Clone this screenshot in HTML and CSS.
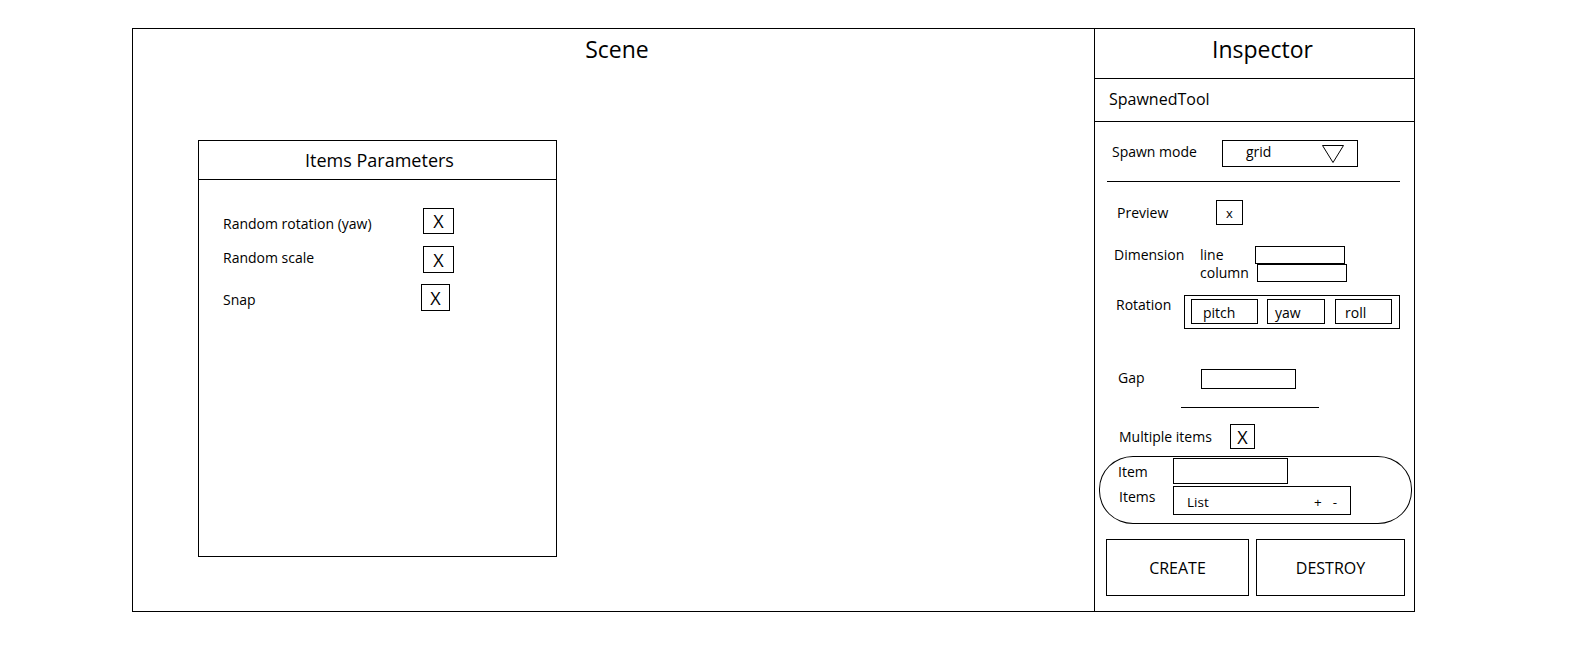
FILE: index.html
```html
<!DOCTYPE html>
<html lang="en">
<head>
<meta charset="utf-8">
<title>Spawn tool mockup</title>
<link rel="stylesheet" href="styles.css">
</head>
<body>
<div class="frame">
  <section class="scene">
    <h1 class="scene-title">Scene</h1>
    <div class="params">
      <div class="params-head">Items Parameters</div>
      <div class="params-body">
        <div class="prow prow-1"><span class="plabel">Random rotation (yaw)</span><span class="pchk">X</span></div>
        <div class="prow prow-2"><span class="plabel">Random scale</span><span class="pchk">X</span></div>
        <div class="prow prow-3"><span class="plabel">Snap</span><span class="pchk">X</span></div>
      </div>
    </div>
  </section>
  <aside class="inspector">
    <div class="insp-head">Inspector</div>
    <div class="insp-sub">SpawnedTool</div>
    <div class="insp-body">
      <div class="spawn-row">
        <span class="spawn-label">Spawn mode</span>
        <div class="dropdown">
          <span class="dropdown-value">grid</span>
          <svg class="tri" width="22" height="18" viewBox="0 0 22 18"><polygon points="0.5,0.5 21.5,0.5 11,17.5" fill="none" stroke="#000" stroke-width="1"/></svg>
        </div>
      </div>
      <div class="hr hr-wide"></div>
      <div class="preview-row">
        <span class="preview-label">Preview</span>
        <span class="small-chk">x</span>
      </div>
      <div class="dim-grid">
        <span class="dim-label">Dimension</span>
        <span class="dim-sub">line</span>
        <span class="field dim-field"></span>
        <span></span>
        <span class="dim-sub">column</span>
        <span class="field dim-field dim-field-2"></span>
      </div>
      <div class="rot-row">
        <span class="rot-label">Rotation</span>
        <div class="rot-box">
          <span class="rot-item rot-pitch">pitch</span>
          <span class="rot-item rot-yaw">yaw</span>
          <span class="rot-item rot-roll">roll</span>
        </div>
      </div>
      <div class="gap-row">
        <span class="gap-label">Gap</span>
        <span class="field gap-field"></span>
      </div>
      <div class="hr hr-short"></div>
      <div class="multi-row">
        <span class="multi-label">Multiple items</span>
        <span class="big-chk">X</span>
      </div>
      <div class="group">
        <div class="group-row group-row-1">
          <span class="group-label">Item</span>
          <span class="field item-field"></span>
        </div>
        <div class="group-row group-row-2">
          <span class="group-label group-label-2">Items</span>
          <div class="list-field"><span>List</span><span class="list-ops"><span>+</span><span>-</span></span></div>
        </div>
      </div>
      <div class="buttons">
        <div class="btn btn-create">CREATE</div>
        <div class="btn btn-destroy">DESTROY</div>
      </div>
    </div>
  </aside>
</div>
</body>
</html>
```
FILE: styles.css
```css
* { box-sizing: border-box; }

body {
  margin: 0;
  background: #fff;
  color: #000;
  font-family: "Open Sans", "Noto Sans", sans-serif;
  font-size: 14px;
}

.frame {
  margin: 28px 0 0 132px;
  width: 1283px;
  height: 584px;
  border: 1px solid #000;
  display: flex;
}

/* ---------- Scene ---------- */
.scene {
  flex: 1;
}

.scene-title {
  margin: 0;
  height: 39px;
  padding-top: 1px;
  line-height: 38px;
  font-size: 23px;
  font-weight: 400;
  text-align: center;
  padding-left: 7px;
}

.params {
  margin: 72px 0 0 65px;
  width: 359px;
  height: 417px;
  border: 1px solid #000;
}

.params-head {
  height: 39px;
  line-height: 38px;
  border-bottom: 1px solid #000;
  text-align: center;
  font-size: 18px;
  padding-left: 4px;
}

.params-body {
  padding: 28px 0 0 24px;
}

.prow {
  display: flex;
  align-items: center;
  font-size: 14px;
}

.plabel {
  width: 200px;
}

.pchk {
  width: 31px;
  height: 26px;
  border: 1px solid #000;
  display: flex;
  align-items: center;
  justify-content: center;
  font-size: 18px;
}

.prow-1 .plabel { padding-top: 5px; }
.prow-2 { margin-top: 12px; }
.prow-2 .plabel { padding-bottom: 5px; }
.prow-2 .pchk { height: 27px; }
.prow-3 { margin-top: 11px; }
.prow-3 .plabel { width: 198px; padding-top: 4px; }
.prow-3 .pchk { width: 29px; height: 27px; }

/* ---------- Inspector ---------- */
.inspector {
  width: 320px;
  border-left: 1px solid #000;
  display: flex;
  flex-direction: column;
}

.insp-head {
  height: 50px;
  padding-top: 1px;
  line-height: 38px;
  border-bottom: 1px solid #000;
  text-align: center;
  font-size: 23px;
  padding-left: 16px;
}

.insp-sub {
  height: 43px;
  line-height: 40px;
  border-bottom: 1px solid #000;
  padding-left: 14px;
  font-size: 16px;
}

.insp-body {
  display: flex;
  flex-direction: column;
}

.field {
  display: block;
  border: 1px solid #000;
}

.spawn-row {
  margin-top: 18px;
  padding-left: 17px;
  display: flex;
  align-items: center;
}

.spawn-label { width: 110px; margin-top: -4px; }

.dropdown {
  width: 136px;
  height: 27px;
  border: 1px solid #000;
  display: flex;
  align-items: center;
  padding-left: 23px;
  padding-right: 13px;
}

.dropdown-value { margin-top: -4px; }

.dropdown .tri {
  margin-left: auto;
  display: block;
}

.hr {
  height: 0;
  border-top: 1px solid #000;
}

.hr-wide {
  margin: 14px 0 0 12px;
  width: 293px;
}

.preview-row {
  margin-top: 18px;
  padding-left: 22px;
  display: flex;
  align-items: center;
}

.preview-label { width: 99px; }

.small-chk {
  width: 27px;
  height: 25px;
  border: 1px solid #000;
  display: flex;
  align-items: center;
  justify-content: center;
  font-size: 13px;
}

.dim-grid {
  margin-top: 21px;
  padding-left: 19px;
  display: grid;
  grid-template-columns: 86px 55px 92px;
  grid-template-rows: 18px 18px;
  line-height: 18px;
}

.dim-field { height: 18px; width: 90px; }
.dim-field-2 { margin-left: 2px; }

.rot-row {
  margin-top: 13px;
  padding-left: 21px;
  display: flex;
  align-items: flex-start;
}

.rot-label {
  width: 68px;
  line-height: 20px;
}

.rot-box {
  width: 216px;
  height: 34px;
  border: 1px solid #000;
  padding: 3px 0 0 6px;
  display: flex;
}

.rot-item {
  height: 25px;
  border: 1px solid #000;
  line-height: 25px;
}

.rot-pitch { width: 67px; padding-left: 11px; }
.rot-yaw { width: 58px; padding-left: 7px; margin-left: 9px; }
.rot-roll { width: 57px; padding-left: 9px; margin-left: 10px; }

.gap-row {
  margin-top: 40px;
  padding-left: 23px;
  display: flex;
  align-items: center;
}

.gap-label { width: 83px; margin-top: -3px; }

.gap-field {
  width: 95px;
  height: 20px;
}

.hr-short {
  margin: 18px 0 0 86px;
  width: 138px;
}

.multi-row {
  margin-top: 16px;
  padding-left: 24px;
  display: flex;
  align-items: center;
}

.multi-label { width: 111px; }

.big-chk {
  width: 25px;
  height: 25px;
  border: 1px solid #000;
  display: flex;
  align-items: center;
  justify-content: center;
  font-size: 18px;
}

.group {
  margin: 7px 0 0 4px;
  width: 313px;
  height: 68px;
  border: 1px solid #000;
  border-radius: 34px / 33px;
  padding-top: 1px;
}

.group-row {
  display: flex;
  align-items: flex-start;
}

.group-row-1 { padding-left: 18px; }
.group-row-2 { padding-left: 19px; margin-top: 2px; }

.group-label {
  width: 55px;
  line-height: 20px;
  margin-top: 4px;
}

.group-label-2 {
  width: 54px;
  margin-top: 1px;
}

.item-field {
  width: 115px;
  height: 26px;
}

.list-field {
  width: 178px;
  height: 29px;
  border: 1px solid #000;
  display: flex;
  align-items: center;
  padding: 3px 13px 0 13px;
  font-size: 13.5px;
}

.list-ops {
  margin-left: auto;
  display: flex;
  gap: 11px;
}

.buttons {
  margin-top: 15px;
  padding-left: 11px;
  display: flex;
  gap: 7px;
}

.btn {
  height: 57px;
  border: 1px solid #000;
  display: flex;
  align-items: center;
  justify-content: center;
  font-size: 16px;
}

.btn-create { width: 143px; }
.btn-destroy { width: 149px; }
```
